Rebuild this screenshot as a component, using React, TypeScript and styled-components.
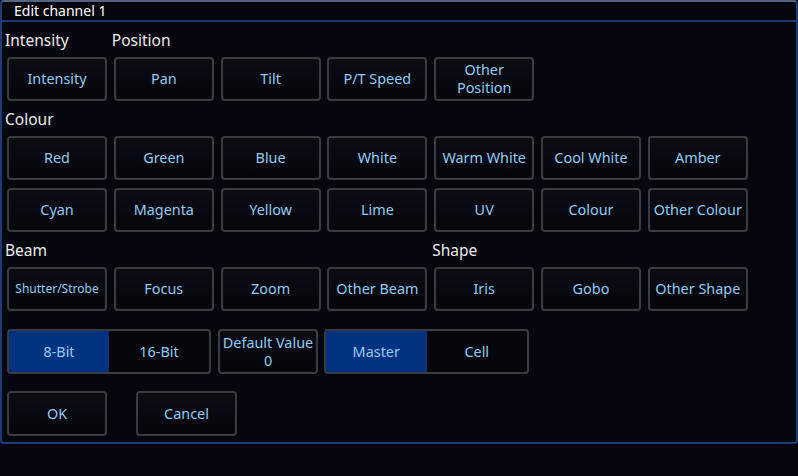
import React from "react";
import styled, { createGlobalStyle } from "styled-components";

const Global = createGlobalStyle`
  html, body { margin: 0; padding: 0; background: #06070e; }
  body { width: 798px; height: 476px; overflow: hidden; font-family: "Noto Sans", "Open Sans", sans-serif; }
`;

const Window = styled.div`
  box-sizing: border-box;
  width: 798px;
  height: 444px;
  background: #06070e;
  border: 2px solid #1d3a7a;
  border-top-color: #566483;
  border-radius: 4px;
  display: flex;
  flex-direction: column;
`;

const TitleBar = styled.div`
  height: 18px;
  padding-left: 12px;
  border-bottom: 2px solid #1b3672;
  color: #ffffff;
  font-size: 14px;
  line-height: 17px;
`;

const Body = styled.div`
  display: flex;
  flex-direction: column;
  padding: 8px 0 0 5px;
`;

const Grid = styled.div<{ $top: number }>`
  display: grid;
  grid-template-columns: repeat(7, 100px);
  column-gap: 6.8px;
  row-gap: 8px;
  grid-auto-rows: 44px;
  margin-top: ${(p) => p.$top}px;
`;

const LabelRow = styled.div<{ $top: number }>`
  display: grid;
  grid-template-columns: repeat(7, 100px);
  column-gap: 6.8px;
  height: 20px;
  margin-top: ${(p) => p.$top}px;
  margin-left: -2px;
`;

const Label = styled.div<{ $col: number }>`
  grid-column: ${(p) => p.$col};
  color: #ececec;
  font-size: 15.5px;
  line-height: 20px;
  white-space: nowrap;
`;

const Btn = styled.div<{ $small?: boolean }>`
  box-sizing: border-box;
  border: 2px solid #3a3c43;
  border-radius: 4px;
  background: linear-gradient(#0b0c14, #05060c);
  box-shadow: inset 0 0 0 1px #0a0b10;
  color: #92ccf2;
  font-size: ${(p) => (p.$small ? "12px" : "14.4px")};
  line-height: 18px;
  display: flex;
  align-items: center;
  justify-content: center;
  text-align: center;
  white-space: nowrap;
`;

const FlexRow = styled.div<{ $top: number }>`
  display: flex;
  margin-top: ${(p) => p.$top}px;
`;

const Seg = styled.div<{ $w: number; $ml?: number }>`
  box-sizing: border-box;
  width: ${(p) => p.$w}px;
  margin-left: ${(p) => p.$ml ?? 0}px;
  height: 45px;
  border: 2px solid #3a3c43;
  border-radius: 4px;
  display: flex;
  overflow: hidden;
  background: #05060c;
`;

const SegPart = styled.div<{ $on?: boolean }>`
  flex: 1;
  display: flex;
  align-items: center;
  justify-content: center;
  color: #92ccf2;
  font-size: 14.4px;
  background: ${(p) => (p.$on ? "#00327f" : "transparent")};
`;

const WideBtn = styled(Btn)<{ $w: number; $ml?: number }>`
  width: ${(p) => p.$w}px;
  margin-left: ${(p) => p.$ml ?? 0}px;
  height: 45px;
`;

export default function App() {
  const colours1 = ["Red", "Green", "Blue", "White", "Warm White", "Cool White", "Amber"];
  const colours2 = ["Cyan", "Magenta", "Yellow", "Lime", "UV", "Colour", "Other Colour"];
  return (
    <>
      <Global />
      <Window>
        <TitleBar>Edit channel 1</TitleBar>
        <Body>
          <LabelRow $top={0}>
            <Label $col={1}>Intensity</Label>
            <Label $col={2}>Position</Label>
          </LabelRow>
          <Grid $top={7}>
            <Btn>Intensity</Btn>
            <Btn>Pan</Btn>
            <Btn>Tilt</Btn>
            <Btn>P/T Speed</Btn>
            <Btn>
              Other
              <br />
              Position
            </Btn>
          </Grid>
          <LabelRow $top={8}>
            <Label $col={1}>Colour</Label>
          </LabelRow>
          <Grid $top={7}>
            {colours1.map((c) => (
              <Btn key={c}>{c}</Btn>
            ))}
            {colours2.map((c) => (
              <Btn key={c}>{c}</Btn>
            ))}
          </Grid>
          <LabelRow $top={8}>
            <Label $col={1}>Beam</Label>
            <Label $col={5}>Shape</Label>
          </LabelRow>
          <Grid $top={7}>
            <Btn $small>Shutter/Strobe</Btn>
            <Btn>Focus</Btn>
            <Btn>Zoom</Btn>
            <Btn>Other Beam</Btn>
            <Btn>Iris</Btn>
            <Btn>Gobo</Btn>
            <Btn>Other Shape</Btn>
          </Grid>
          <FlexRow $top={18}>
            <Seg $w={204}>
              <SegPart $on>8-Bit</SegPart>
              <SegPart>16-Bit</SegPart>
            </Seg>
            <WideBtn $w={100} $ml={7}>
              Default Value
              <br />0
            </WideBtn>
            <Seg $w={205} $ml={6}>
              <SegPart $on>Master</SegPart>
              <SegPart>Cell</SegPart>
            </Seg>
          </FlexRow>
          <FlexRow $top={17}>
            <WideBtn $w={100}>OK</WideBtn>
            <WideBtn $w={101} $ml={29}>
              Cancel
            </WideBtn>
          </FlexRow>
        </Body>
      </Window>
    </>
  );
}
